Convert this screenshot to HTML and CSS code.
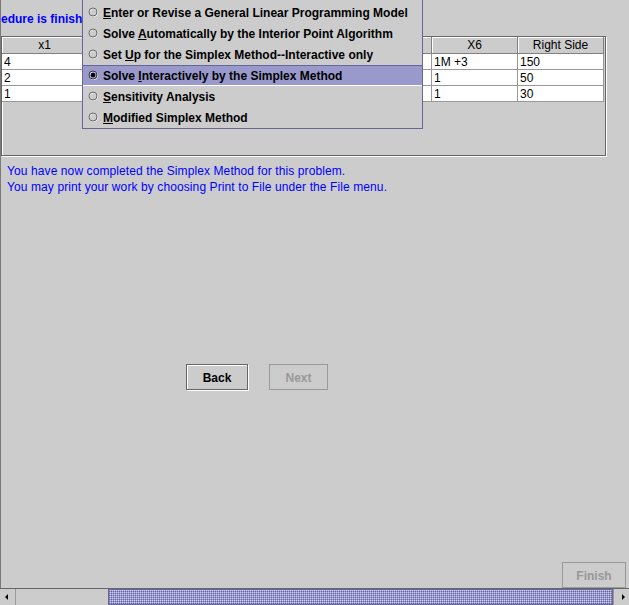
FILE: index.html
```html
<!DOCTYPE html>
<html lang="en">
<head>
<meta charset="utf-8">
<title>Simplex Method</title>
<link rel="stylesheet" href="styles.css">
</head>
<body>
<div class="window">
  <div class="viewport">
    <div class="title">edure is finish</div>
    <div class="scrollpane">
      <div class="grid-table">
        <div class="trow thead">
          <div class="th">x1</div><div class="th"></div><div class="th"></div><div class="th"></div><div class="th"></div><div class="th">X6</div><div class="th">Right Side</div>
        </div>
        <div class="trow">
          <div class="td">4</div><div class="td"></div><div class="td"></div><div class="td"></div><div class="td"></div><div class="td">1M +3</div><div class="td">150</div>
        </div>
        <div class="trow">
          <div class="td">2</div><div class="td"></div><div class="td"></div><div class="td"></div><div class="td"></div><div class="td">1</div><div class="td">50</div>
        </div>
        <div class="trow">
          <div class="td">1</div><div class="td"></div><div class="td"></div><div class="td"></div><div class="td"></div><div class="td">1</div><div class="td">30</div>
        </div>
      </div>
    </div>
    <div class="message">
      <p>You have now completed the Simplex Method for this problem.</p>
      <p>You may print your work by choosing Print to File under the File menu.</p>
    </div>
    <div class="nav">
      <button class="btn btn-back">Back</button>
      <button class="btn btn-next" disabled>Next</button>
    </div>
    <div class="footer">
      <button class="btn btn-finish" disabled>Finish</button>
    </div>

    <div class="menu">
      <div class="item"><svg class="radio" viewBox="0 0 11 11" width="11" height="11"><circle cx="5.5" cy="5.5" r="4" fill="none" stroke="#fff"/><circle cx="5" cy="5" r="4" fill="none" stroke="#666"/></svg><span><u>E</u>nter or Revise a General Linear Programming Model</span></div>
      <div class="item"><svg class="radio" viewBox="0 0 11 11" width="11" height="11"><circle cx="5.5" cy="5.5" r="4" fill="none" stroke="#fff"/><circle cx="5" cy="5" r="4" fill="none" stroke="#666"/></svg><span>Solve <u>A</u>utomatically by the Interior Point Algorithm</span></div>
      <div class="item"><svg class="radio" viewBox="0 0 11 11" width="11" height="11"><circle cx="5.5" cy="5.5" r="4" fill="none" stroke="#fff"/><circle cx="5" cy="5" r="4" fill="none" stroke="#666"/></svg><span>Set <u>U</u>p for the Simplex Method--Interactive only</span></div>
      <div class="item selected"><svg class="radio" viewBox="0 0 11 11" width="11" height="11"><circle cx="5.5" cy="5.5" r="4" fill="none" stroke="#fff"/><circle cx="5" cy="5" r="4" fill="none" stroke="#333"/><circle cx="5" cy="5" r="2.3" fill="#000"/></svg><span>Solve <u>I</u>nteractively by the Simplex Method</span></div>
      <div class="item"><svg class="radio" viewBox="0 0 11 11" width="11" height="11"><circle cx="5.5" cy="5.5" r="4" fill="none" stroke="#fff"/><circle cx="5" cy="5" r="4" fill="none" stroke="#666"/></svg><span><u>S</u>ensitivity Analysis</span></div>
      <div class="item"><svg class="radio" viewBox="0 0 11 11" width="11" height="11"><circle cx="5.5" cy="5.5" r="4" fill="none" stroke="#fff"/><circle cx="5" cy="5" r="4" fill="none" stroke="#666"/></svg><span><u>M</u>odified Simplex Method</span></div>
    </div>
  </div>

  <div class="hscroll">
    <div class="arrow"><svg viewBox="0 0 16 16" width="16" height="16"><path d="M5 8 L8 5 L8 11 Z" fill="#000"/></svg></div>
    <div class="track"><div class="thumb"></div></div>
    <div class="arrow"><svg viewBox="0 0 16 16" width="16" height="16"><path d="M11 8 L8 5 L8 11 Z" fill="#000"/></svg></div>
  </div>
</div>
</body>
</html>
```

FILE: styles.css
```css
html, body {
  margin: 0;
  padding: 0;
  background: #cccccc;
}

body {
  font-family: "Liberation Sans", Arial, sans-serif;
  font-size: 12px;
  color: #000;
}

.window {
  width: 629px;
  height: 605px;
  display: flex;
  flex-direction: column;
  overflow: hidden;
}

.viewport {
  position: relative;
  flex: 1;
  min-height: 0;
  display: flex;
  flex-direction: column;
  border-left: 1px solid #7a7a7a;
}

.title {
  box-sizing: border-box;
  height: 36px;
  padding: 12px 0 0 0;
  line-height: 15px;
  font-weight: bold;
  color: #0000ff;
  white-space: nowrap;
}

.scrollpane {
  box-sizing: border-box;
  width: 605px;
  height: 120px;
  border: 1px solid #666666;
  box-shadow: 1px 1px 0 #ffffff, inset 1px 1px 0 #ffffff;
}

.grid-table {
  display: flex;
  flex-direction: column;
}

.trow {
  display: grid;
  grid-template-columns: repeat(7, 86px);
}

.th {
  box-sizing: border-box;
  height: 17px;
  line-height: 16px;
  text-align: center;
  background: #cccccc;
  border-right: 1px solid #808080;
  border-bottom: 1px solid #808080;
  box-shadow: inset 1px 1px 0 #ffffff;
}

.td {
  box-sizing: border-box;
  height: 16px;
  line-height: 16px;
  padding-left: 2px;
  background: #ffffff;
  border-right: 1px solid #999999;
  border-bottom: 1px solid #999999;
  white-space: nowrap;
}

.message {
  margin: 7px 0 0 6px;
  color: #0000ff;
  letter-spacing: 0.1px;
}

.message p {
  margin: 0;
  line-height: 16px;
}

.nav {
  display: flex;
  gap: 21px;
  margin-top: 169px;
  padding-left: 185px;
}

.btn {
  box-sizing: border-box;
  height: 26px;
  padding: 1px 0 0 0;
  font-family: "Liberation Sans", Arial, sans-serif;
  font-size: 12px;
  font-weight: bold;
  background: #cccccc;
  color: #000;
  border: 1px solid #666666;
  box-shadow: inset 1px 1px 0 #ffffff, 1px 1px 0 #ffffff;
}

.btn:disabled {
  color: #999999;
  border-color: #999999;
  box-shadow: none;
}

.btn-back { width: 62px; }
.btn-next { width: 59px; }

.footer {
  margin-top: auto;
  display: flex;
  justify-content: flex-end;
  padding-right: 3px;
}

.btn-finish { width: 64px; }

/* popup menu */
.menu {
  position: absolute;
  left: 81px;
  top: 0;
  width: 341px;
  box-sizing: border-box;
  padding: 2px 0 0 0;
  border: 1px solid #666699;
  border-top: none;
  background: #cccccc;
}

.item {
  height: 21px;
  display: flex;
  align-items: center;
  font-weight: bold;
  white-space: nowrap;
  box-sizing: border-box;
}

.item .radio {
  margin: 0 4px 0 5px;
  flex: none;
}

.item.selected {
  background: #9999cc;
  border-top: 1px solid #666699;
  border-bottom: 1px solid #ffffff;
}

/* horizontal scrollbar */
.hscroll {
  height: 16px;
  display: flex;
  border-top: 1px solid #666666;
  background: #cccccc;
}

.arrow {
  width: 16px;
  height: 16px;
  flex: none;
  box-sizing: border-box;
  border-right: 1px solid #999999;
}

.arrow:last-child {
  border-right: none;
  border-left: 1px solid #999999;
}

.arrow svg {
  display: block;
}

.track {
  flex: 1;
  display: flex;
  padding-left: 92px;
}

.thumb {
  flex: 1;
  box-sizing: border-box;
  border: 1px solid #666699;
  background: conic-gradient(#ccccff 0 25%, #9999cc 0 50%, #666699 0 75%, #9999cc 0) 0 0 / 2px 2px;
}
```
